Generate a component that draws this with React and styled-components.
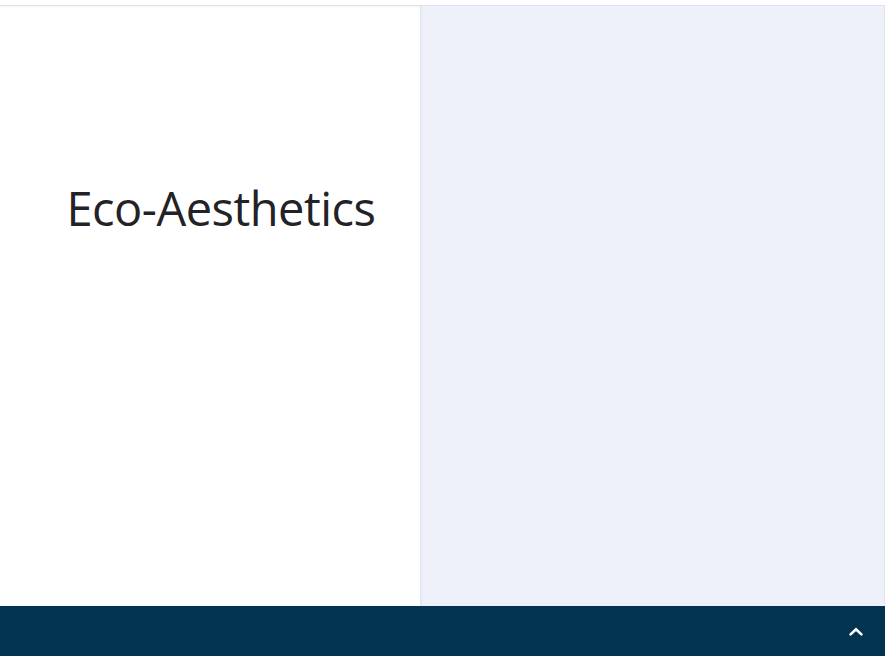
import React from "react";
import styled, { createGlobalStyle } from "styled-components";

const Global = createGlobalStyle`
  html, body { margin: 0; padding: 0; height: 100%; }
  body { font-family: "Open Sans", "Noto Sans", sans-serif; background: #fff; overflow: hidden; }
  #root { height: 100%; }
`;

const Page = styled.div`
  height: 656px;
  display: flex;
  flex-direction: column;
`;

const TopBar = styled.div`
  height: 5px;
  border-bottom: 1px solid #e3e0ea;
  box-shadow: 0 1px 2px rgba(60, 50, 90, 0.06);
  background: #fff;
`;

const Main = styled.div`
  flex: 1;
  display: grid;
  grid-template-columns: 420px 1fr;
  min-height: 0;
`;

const Hero = styled.section`
  display: flex;
  justify-content: center;
  padding: 170px 0 0 22px;
`;

const Title = styled.h1`
  margin: 0;
  font-family: "Open Sans", sans-serif;
  font-weight: 400;
  font-size: 47px;
  line-height: 64px;
  letter-spacing: -0.5px;
  color: #232226;
`;

const Side = styled.aside`
  background: #eef1f9;
  box-shadow: inset 3px 0 3px -2px rgba(40, 50, 90, 0.08), inset -2px 0 1px -1px rgba(40, 50, 90, 0.07);
`;

const Footer = styled.footer`
  height: 50px;
  background: #02334f;
  display: flex;
  align-items: center;
  justify-content: flex-end;
  padding-right: 22px;
`;

const UpButton = styled.button`
  border: 0;
  background: transparent;
  padding: 0;
  width: 14px;
  height: 10px;
  display: flex;
  align-items: center;
  justify-content: center;
  cursor: pointer;
`;

export default function App() {
  return (
    <>
      <Global />
      <Page>
        <TopBar />
        <Main>
          <Hero>
            <Title>Eco-Aesthetics</Title>
          </Hero>
          <Side />
        </Main>
        <Footer>
          <UpButton aria-label="Back to top">
            <svg width="14" height="9" viewBox="0 0 14 9">
              <path d="M1.6 7.4 L7 2.2 L12.4 7.4" fill="none" stroke="#fff" strokeWidth="2.6" strokeLinecap="round" strokeLinejoin="miter" />
            </svg>
          </UpButton>
        </Footer>
      </Page>
    </>
  );
}
